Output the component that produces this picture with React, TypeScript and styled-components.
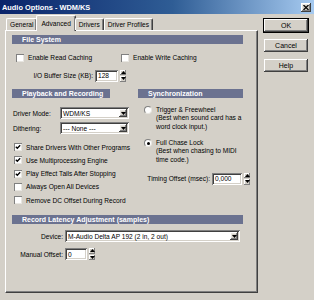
import styled, { createGlobalStyle, css } from "styled-components";

const GlobalStyle = createGlobalStyle`
  html, body {
    margin: 0;
    padding: 0;
    background: #d4d0c8;
  }
  body {
    font-family: "Liberation Sans", Arial, sans-serif;
    font-size: 6.6px;
    color: #000;
  }
`;

const raised = css`
  box-shadow: inset -1px -1px #404040, inset 1px 1px #ffffff, inset -2px -2px #808080, inset 2px 2px #e8e6e1;
`;

const sunken = css`
  box-shadow: inset 1px 1px #808080, inset -1px -1px #ffffff, inset 2px 2px #404040, inset -2px -2px #d4d0c8;
`;

const Window = styled.div`
  width: 314px;
  height: 300px;
  background: #d4d0c8;
  overflow: hidden;
  display: flex;
  flex-direction: column;
`;

const TitleBar = styled.div`
  height: 14px;
  flex: none;
  display: flex;
  align-items: center;
  justify-content: space-between;
  padding: 0 3px 0 2px;
  background: linear-gradient(90deg, #0a246a 0%, #2f5d95 55%, #a6caf0 100%);
  color: #fff;
  font-weight: bold;
  font-size: 7.4px;
`;

const CloseButton = styled.div`
  width: 10px;
  height: 9px;
  background: #d4d0c8;
  display: flex;
  align-items: center;
  justify-content: center;
  ${raised};
`;

const Body = styled.div`
  display: flex;
  padding-left: 5px;
`;

const TabArea = styled.div`
  width: 253px;
  display: flex;
  flex-direction: column;
`;

const TabStrip = styled.div`
  height: 16px;
  display: flex;
  align-items: flex-end;
  padding-left: 1px;
  position: relative;
  z-index: 1;
`;

const Tab = styled.div<{ $active?: boolean }>`
  height: ${(p) => (p.$active ? 16 : 12)}px;
  padding: 0 ${(p) => (p.$active ? 4 : 3)}px;
  margin: 0 ${(p) => (p.$active ? -1 : 0)}px ${(p) => (p.$active ? -1 : 0)}px;
  display: flex;
  align-items: center;
  background: #d4d0c8;
  border-top: 1px solid #fff;
  border-left: 1px solid #fff;
  border-right: 1px solid #404040;
  border-radius: 2px 2px 0 0;
  box-shadow: inset -1px 0 #808080;
  box-sizing: border-box;
  white-space: nowrap;
`;

const Panel = styled.div`
  height: 263px;
  box-sizing: border-box;
  padding: 4px 14px 0 6px;
  border-top: 1px solid #fff;
  border-left: 1px solid #fff;
  border-right: 1px solid #404040;
  border-bottom: 1px solid #404040;
  box-shadow: inset -1px -1px #808080;
  display: flex;
  flex-direction: column;
`;

const SectionHeader = styled.div<{ $top?: number }>`
  height: 9px;
  margin-top: ${(p) => p.$top ?? 0}px;
  line-height: 9px;
  background: #6b7290;
  color: #fff;
  font-weight: bold;
  font-size: 7px;
  padding-left: 10px;
  white-space: nowrap;
  overflow: hidden;
`;

const FsChecks = styled.div`
  margin-top: 9px;
  padding-left: 4px;
  display: grid;
  grid-template-columns: 105px auto;
`;

const FieldRow = styled.div<{ $top: number; $height?: number }>`
  margin-top: ${(p) => p.$top}px;
  height: ${(p) => p.$height ?? 12}px;
  display: flex;
  align-items: center;
`;

const FieldLabel = styled.span<{ $width: number; $right?: boolean }>`
  width: ${(p) => p.$width}px;
  flex: none;
  text-align: ${(p) => (p.$right ? "right" : "left")};
  padding-right: ${(p) => (p.$right ? 2 : 0)}px;
  padding-left: ${(p) => (p.$right ? 0 : 1)}px;
  box-sizing: border-box;
  white-space: nowrap;
`;

const Columns = styled.div`
  margin-top: 8px;
  height: 118px;
  display: grid;
  grid-template-columns: 98px 105px;
  column-gap: 28px;
`;

const Column = styled.div`
  display: flex;
  flex-direction: column;
`;

const CheckItem = styled.label<{ $height?: number }>`
  height: ${(p) => p.$height ?? 9}px;
  display: flex;
  align-items: center;
  gap: 4px;
  white-space: nowrap;
`;

const CheckList = styled.div`
  margin-top: 6.5px;
  padding-left: 2px;
  display: flex;
  flex-direction: column;
`;

const Box = styled.span`
  width: 8px;
  height: 8px;
  flex: none;
  background: #fff;
  box-sizing: border-box;
  box-shadow: inset 1px 1px #808080, inset -1px -1px #e8e6e1;
  display: flex;
  align-items: center;
  justify-content: center;
`;

const RadioItem = styled.div<{ $top: number }>`
  margin-top: ${(p) => p.$top}px;
  padding-left: 6px;
  display: flex;
  gap: 4px;
  line-height: 8.5px;
  white-space: nowrap;
`;

const RadioDot = styled.span<{ $on?: boolean }>`
  width: 8px;
  height: 8px;
  margin-top: 0.5px;
  flex: none;
  border-radius: 50%;
  background: #fff;
  box-sizing: border-box;
  border: 1px solid #808080;
  border-right-color: #e8e6e1;
  border-bottom-color: #e8e6e1;
  display: flex;
  align-items: center;
  justify-content: center;
  &::after {
    content: "";
    width: 3px;
    height: 3px;
    border-radius: 50%;
    background: ${(p) => (p.$on ? "#000" : "transparent")};
  }
`;

const TextField = styled.div<{ $width: number }>`
  width: ${(p) => p.$width}px;
  height: 12px;
  flex: none;
  background: #fff;
  box-sizing: border-box;
  padding-left: 3px;
  display: flex;
  align-items: center;
  white-space: nowrap;
  overflow: hidden;
  ${sunken};
`;

const Select = styled(TextField)`
  justify-content: space-between;
  padding-right: 2px;
`;

const DropButton = styled.span`
  width: 8px;
  height: 8px;
  flex: none;
  background: #d4d0c8;
  display: flex;
  align-items: center;
  justify-content: center;
  ${raised};
`;

const Spinner = styled.div`
  width: 6px;
  height: 12px;
  margin-left: 2px;
  flex: none;
  display: flex;
  flex-direction: column;
  gap: 1px;
`;

const SpinHalf = styled.span`
  flex: 1;
  background: #d4d0c8;
  display: flex;
  align-items: center;
  justify-content: center;
  box-shadow: inset -1px -1px #808080, inset 1px 1px #fff;
`;

const ButtonColumn = styled.div`
  margin: 4px 0 0 5px;
  width: 46px;
  display: flex;
  flex-direction: column;
  gap: 5px;
`;

const DialogButton = styled.div<{ $default?: boolean }>`
  height: 15px;
  display: flex;
  align-items: center;
  justify-content: center;
  box-sizing: border-box;
  font-size: 7px;
  border: 1px solid ${(p) => (p.$default ? "#000" : "transparent")};
  box-shadow: inset -1px -1px #404040, inset 1px 1px #ffffff, inset -2px -2px #808080;
`;

const Tri = ({ up }: { up?: boolean }) => (
  <svg width="5" height="3" viewBox="0 0 5 3">
    <path d={up ? "M2.5 0 L5 3 L0 3 Z" : "M0 0 L5 0 L2.5 3 Z"} fill="#000" />
  </svg>
);

const Check = ({ on }: { on?: boolean }) => (
  <Box>
    {on && (
      <svg width="6" height="6" viewBox="0 0 6 6">
        <path d="M0.8 2.8 L2.3 4.3 L5.2 1.2" stroke="#000" strokeWidth="1.3" fill="none" />
      </svg>
    )}
  </Box>
);

const Dropdown = ({ width, value }: { width: number; value: string }) => (
  <Select $width={width}>
    <span>{value}</span>
    <DropButton>
      <Tri />
    </DropButton>
  </Select>
);

const SpinField = ({ width, value }: { width: number; value: string }) => (
  <>
    <TextField $width={width}>{value}</TextField>
    <Spinner>
      <SpinHalf>
        <Tri up />
      </SpinHalf>
      <SpinHalf>
        <Tri />
      </SpinHalf>
    </Spinner>
  </>
);

const checks = [
  { label: "Share Drivers With Other Programs", on: true },
  { label: "Use Multiprocessing Engine", on: true },
  { label: "Play Effect Tails After Stopping", on: true },
  { label: "Always Open All Devices", on: false },
  { label: "Remove DC Offset During Record", on: false },
];

export default function App() {
  return (
    <>
      <GlobalStyle />
      <Window>
        <TitleBar>
          <span>Audio Options - WDM/KS</span>
          <CloseButton>
            <svg width="6" height="5" viewBox="0 0 6 5">
              <path d="M0.5 0 L5.5 5 M5.5 0 L0.5 5" stroke="#000" strokeWidth="1.2" />
            </svg>
          </CloseButton>
        </TitleBar>
        <Body>
          <TabArea>
            <TabStrip>
              <Tab>General</Tab>
              <Tab $active>Advanced</Tab>
              <Tab>Drivers</Tab>
              <Tab>Driver Profiles</Tab>
            </TabStrip>
            <Panel>
              <SectionHeader>File System</SectionHeader>
              <FsChecks>
                <CheckItem>
                  <Check />
                  Enable Read Caching
                </CheckItem>
                <CheckItem>
                  <Check />
                  Enable Write Caching
                </CheckItem>
              </FsChecks>
              <FieldRow $top={8} $height={11}>
                <FieldLabel $width={83} $right>
                  I/O Buffer Size (KB):
                </FieldLabel>
                <SpinField width={23} value="128" />
              </FieldRow>

              <Columns>
                <Column>
                  <SectionHeader>Playback and Recording</SectionHeader>
                  <FieldRow $top={9}>
                    <FieldLabel $width={48}>Driver Mode:</FieldLabel>
                    <Dropdown width={69} value="WDM/KS" />
                  </FieldRow>
                  <FieldRow $top={3}>
                    <FieldLabel $width={48}>Dithering:</FieldLabel>
                    <Dropdown width={69} value="--- None ---" />
                  </FieldRow>
                  <CheckList>
                    {checks.map((c) => (
                      <CheckItem key={c.label} $height={13.25}>
                        <Check on={c.on} />
                        {c.label}
                      </CheckItem>
                    ))}
                  </CheckList>
                </Column>
                <Column>
                  <SectionHeader>Synchronization</SectionHeader>
                  <RadioItem $top={7.5}>
                    <RadioDot />
                    <div>
                      Trigger &amp; Freewheel
                      <br />
                      (Best when sound card has a
                      <br />
                      word clock input.)
                    </div>
                  </RadioItem>
                  <RadioItem $top={7.5}>
                    <RadioDot $on />
                    <div>
                      Full Chase Lock
                      <br />
                      (Best when chasing to MIDI
                      <br />
                      time code.)
                    </div>
                  </RadioItem>
                  <FieldRow $top={8.5}>
                    <FieldLabel $width={74} $right>
                      Timing Offset (msec):
                    </FieldLabel>
                    <SpinField width={30} value="0,000" />
                  </FieldRow>
                </Column>
              </Columns>

              <SectionHeader $top={8}>Record Latency Adjustment (samples)</SectionHeader>
              <FieldRow $top={6}>
                <FieldLabel $width={53} $right>
                  Device:
                </FieldLabel>
                <Dropdown width={175} value="M-Audio Delta AP 192 (2 in, 2 out)" />
              </FieldRow>
              <FieldRow $top={6}>
                <FieldLabel $width={53} $right>
                  Manual Offset:
                </FieldLabel>
                <SpinField width={22} value="0" />
              </FieldRow>
            </Panel>
          </TabArea>
          <ButtonColumn>
            <DialogButton $default>OK</DialogButton>
            <DialogButton>Cancel</DialogButton>
            <DialogButton>Help</DialogButton>
          </ButtonColumn>
        </Body>
      </Window>
    </>
  );
}
